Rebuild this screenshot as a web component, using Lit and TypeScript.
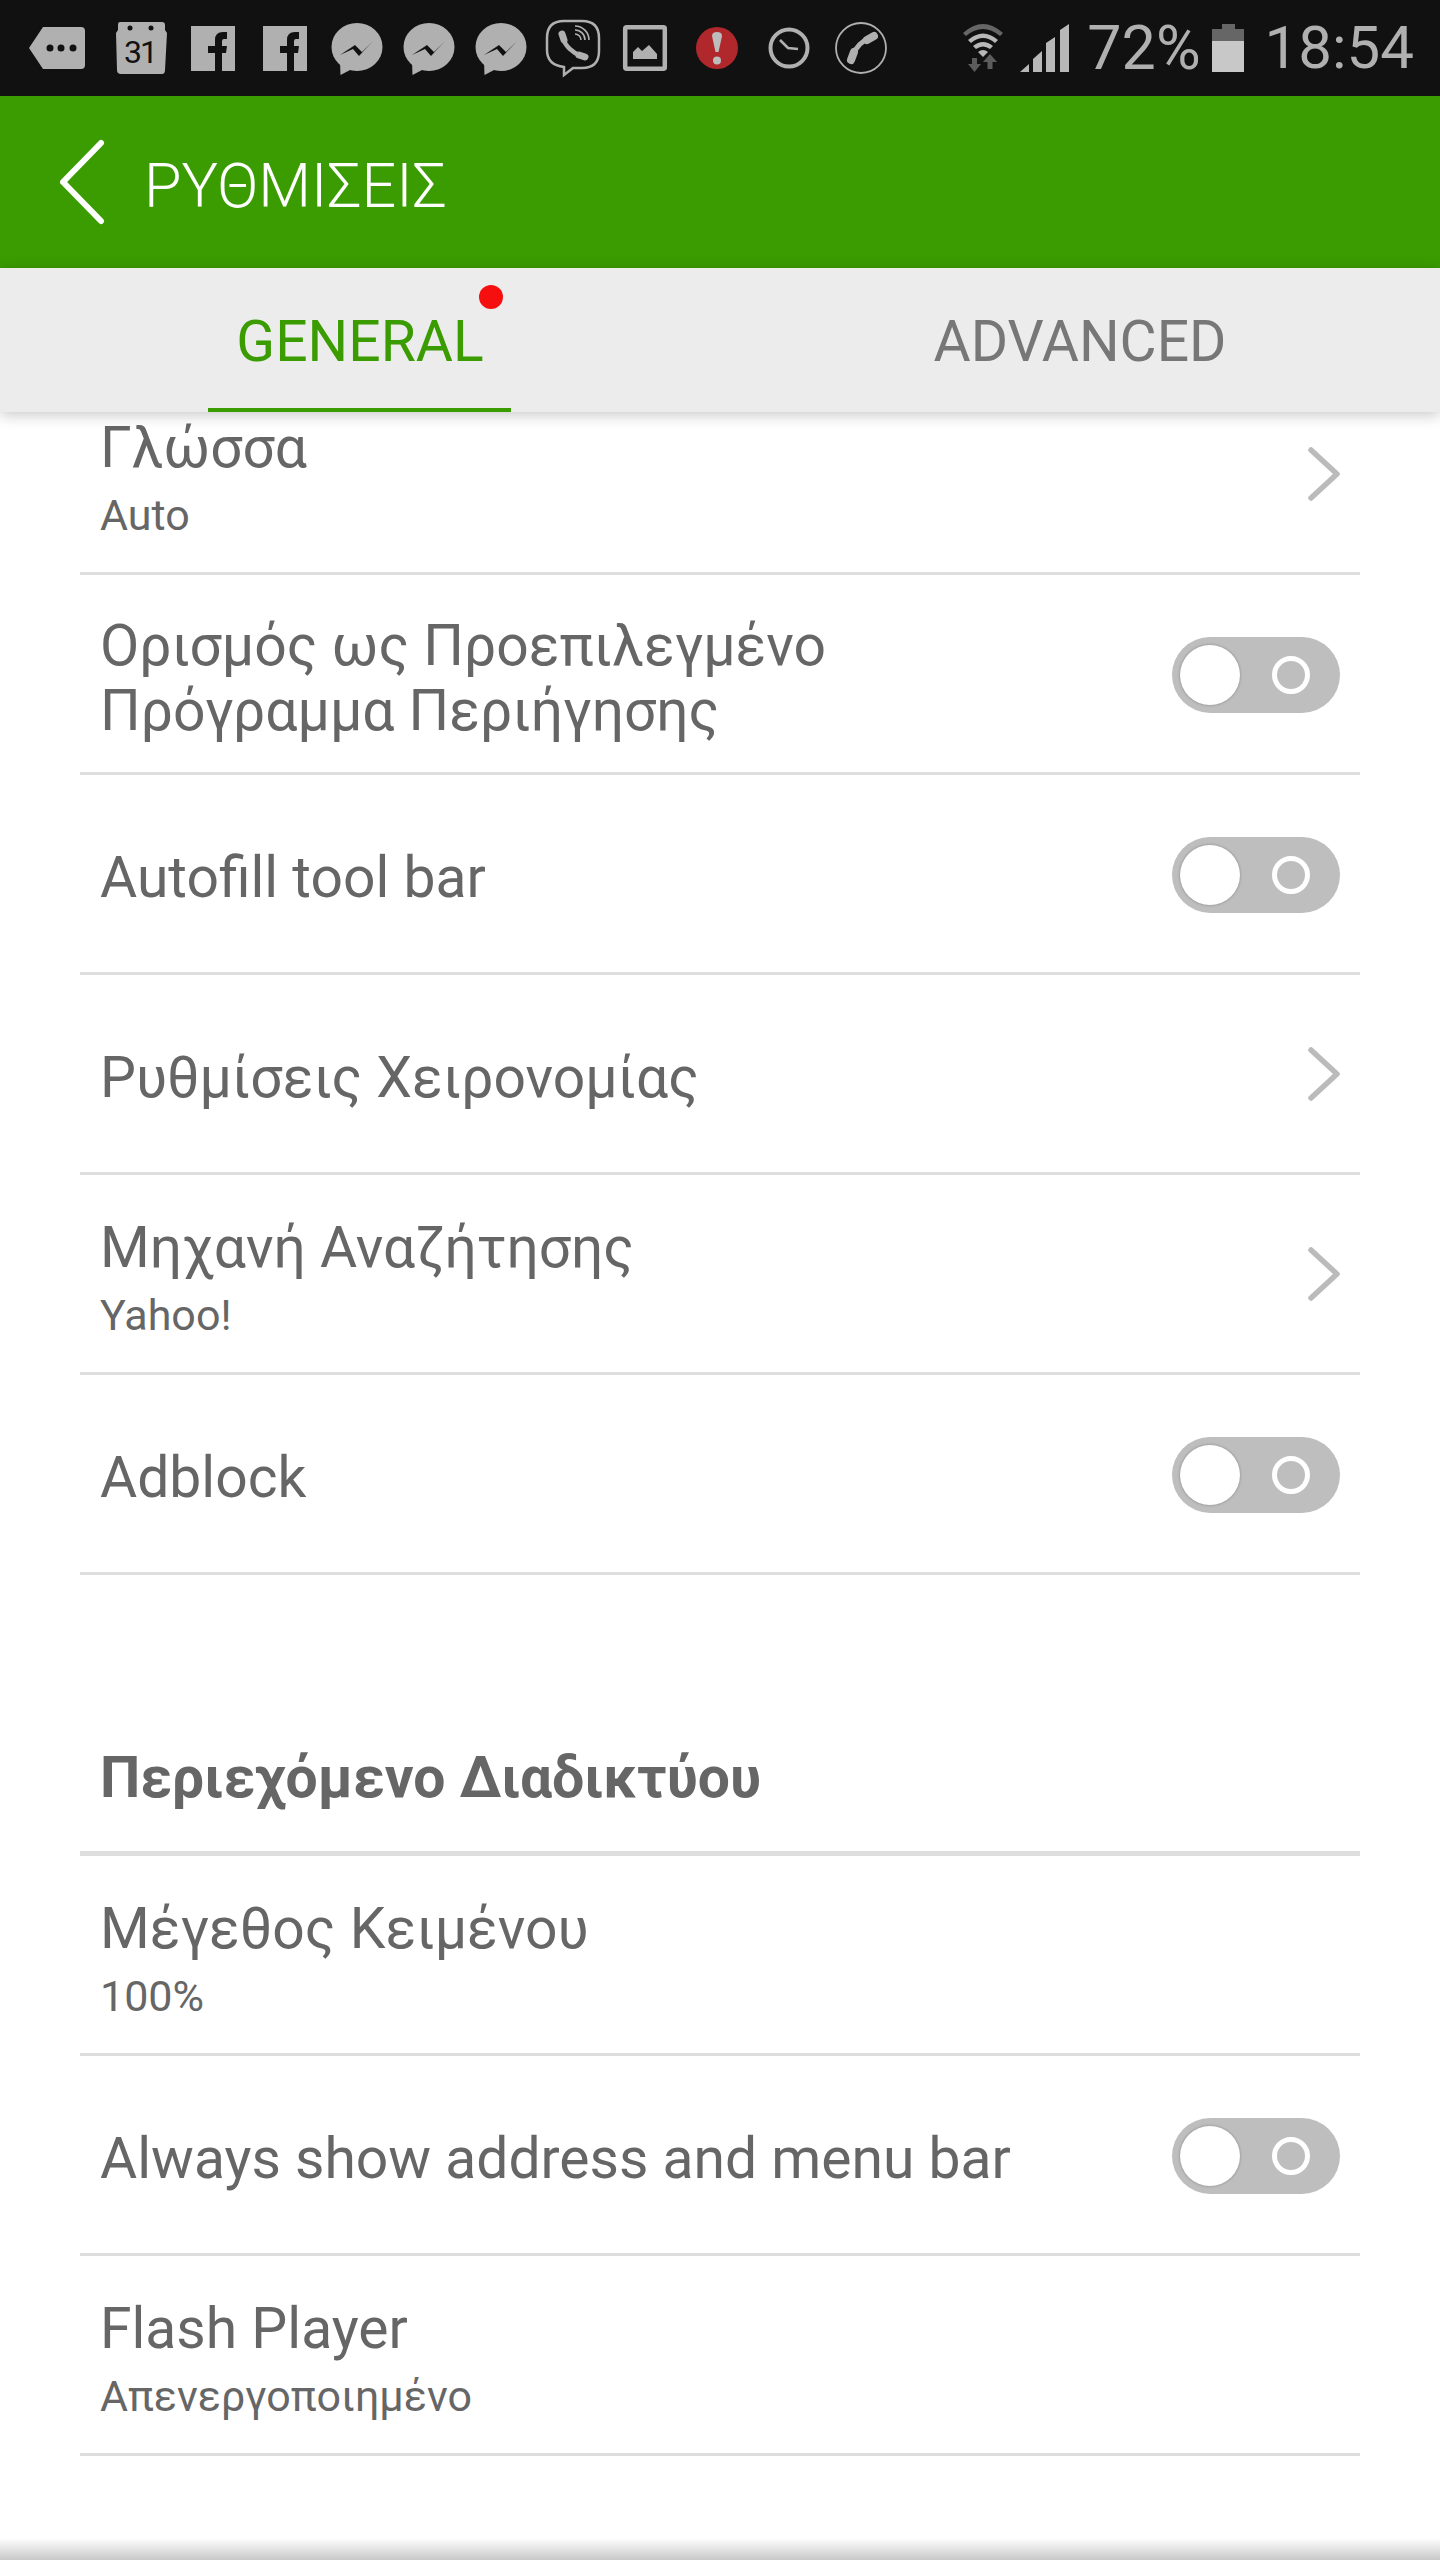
import { LitElement, html, css, svg, nothing } from 'lit';
import { customElement } from 'lit/decorators.js';

type Row = {
  title: string;
  sub?: string;
  trail?: 'toggle' | 'chevron';
};

const generalRows: Row[] = [
  { title: 'Γλώσσα', sub: 'Auto', trail: 'chevron' },
  { title: 'Ορισμός ως Προεπιλεγμένο\nΠρόγραμμα Περιήγησης', trail: 'toggle' },
  { title: 'Autofill tool bar', trail: 'toggle' },
  { title: 'Ρυθμίσεις Χειρονομίας', trail: 'chevron' },
  { title: 'Μηχανή Αναζήτησης', sub: 'Yahoo!', trail: 'chevron' },
  { title: 'Adblock', trail: 'toggle' },
];

const webRows: Row[] = [
  { title: 'Μέγεθος Κειμένου', sub: '100%' },
  { title: 'Always show address and menu bar', trail: 'toggle' },
  { title: 'Flash Player', sub: 'Απενεργοποιημένο' },
];

const GREY = '#b0b0b0';
const BG = '#111111';

// notification icons, each drawn in a 72x96 cell
const tagIcon = svg`
  <path d="M8 48 L22 27 H60 Q64 27 64 31 V65 Q64 69 60 69 H22 Z" fill=${GREY} />
  <circle cx="29" cy="48" r="3.5" fill=${BG} />
  <circle cx="40" cy="48" r="3.5" fill=${BG} />
  <circle cx="52" cy="48" r="3.5" fill=${BG} />`;

const calendarIcon = svg`
  <path d="M15 22 H57 Q60 22 60 25 V30 L62 33 L60 70 Q60 74 57 74 H16 Q12 74 12 70 L11 33 L13 30 V25 Q13 22 15 22 Z" fill=${GREY} />
  <circle cx="25" cy="28" r="2.5" fill=${BG} />
  <circle cx="46" cy="28" r="2.5" fill=${BG} />
  <text x="35" y="63" text-anchor="middle" font-family="Roboto" font-size="32" letter-spacing="-2" fill=${BG}>31</text>`;

const facebookIcon = svg`
  <rect x="14" y="26" width="44" height="45" fill=${GREY} />
  <path d="M38 71 V53 H31 V46 H38 V40 Q38 32 46 32 H50 V39 H47 Q45 39 45 41 V46 H50 L49 53 H45 V71 Z" fill=${BG} />`;

const messengerIcon = svg`
  <ellipse cx="36" cy="47" rx="25.5" ry="24" fill=${GREY} />
  <path d="M19 60 L19.5 75 L31 69 Z" fill=${GREY} />
  <path d="M19 55 L34 45 L41 52 L52 41 L38 56 L32 49 Z" fill=${BG} />`;

const viberIcon = svg`
  <path d="M27 21 H45 Q62 21 62 38 V51 Q62 68 45 68 H36 L27 75 V67 Q10 65 10 50 V38 Q10 21 27 21 Z" fill="none" stroke=${GREY} stroke-width="2.5" />
  <path d="M26 38 C28 46 36 53 44 56" fill="none" stroke=${GREY} stroke-width="4.5" stroke-linecap="round" />
  <path d="M25 34 L27 40 M42 55 L48 57" fill="none" stroke=${GREY} stroke-width="7" stroke-linecap="round" />
  <path d="M38 34 a6 6 0 0 1 6 6 M38 30 a10 10 0 0 1 10 10 M38 26 a14 14 0 0 1 14 14" fill="none" stroke=${GREY} stroke-width="1.6" />`;

const imageIcon = svg`
  <rect x="16.2" y="27.2" width="39.6" height="41.6" rx="1.5" fill="none" stroke=${GREY} stroke-width="4.5" />
  <path d="M24 59 V52 L29 47 L33 51 L40 45 L48 54 V59 Z" fill=${GREY} />`;

const alertIcon = svg`
  <circle cx="36" cy="48" r="21" fill="#b0282c" />
  <path d="M31 36 Q31 32 36 32 Q41 32 41 36 L37.5 52 H34.5 Z" fill="#bdbdbd" />
  <circle cx="36" cy="60.5" r="4" fill="#bdbdbd" />`;

const clockIcon = svg`
  <circle cx="36" cy="48" r="18.5" fill="none" stroke=${GREY} stroke-width="4" />
  <path d="M27 40 L35 48 L45 49" fill="none" stroke=${GREY} stroke-width="2.6" />`;

const callIcon = svg`
  <circle cx="36" cy="48" r="25" fill="none" stroke=${GREY} stroke-width="1.8" />
  <path d="M45 38 C37 41 31 47 28 55" fill="none" stroke=${GREY} stroke-width="5" />
  <path d="M42 40 L49 36 M29 52 L26 60" fill="none" stroke=${GREY} stroke-width="8" stroke-linecap="round" />`;

const notifications = [
  tagIcon,
  calendarIcon,
  facebookIcon,
  facebookIcon,
  messengerIcon,
  messengerIcon,
  messengerIcon,
  viberIcon,
  imageIcon,
  alertIcon,
  clockIcon,
  callIcon,
];

@customElement('app-root')
export class AppRoot extends LitElement {
  static styles = css`
    :host {
      display: flex;
      flex-direction: column;
      width: 1440px;
      height: 2560px;
      background: #ffffff;
      font-family: Roboto, 'Liberation Sans', sans-serif;
      color: #666666;
      overflow: hidden;
    }

    .status {
      flex: none;
      display: flex;
      align-items: center;
      height: 96px;
      padding: 0 26px 0 21px;
      box-sizing: border-box;
      background: #111111;
    }
    .cell {
      display: block;
      width: 72px;
      height: 96px;
    }
    .cell.first {
      margin-right: 12px;
    }
    .net {
      display: block;
      width: 116px;
      height: 96px;
      margin-left: auto;
      margin-right: 14px;
    }
    .status-text {
      font-size: 60px;
      line-height: 96px;
      color: #b0b0b0;
    }
    .percent {
      font-size: 61px;
    }
    .battery {
      display: block;
      width: 32px;
      height: 96px;
      margin: 0 21px 0 11px;
    }

    .header {
      flex: none;
      display: flex;
      align-items: center;
      gap: 37px;
      height: 172px;
      padding-left: 58px;
      background: #3a9c00;
    }
    .back {
      display: block;
      width: 49px;
      height: 92px;
    }
    .header-title {
      padding-top: 8px;
      font-size: 61px;
      font-weight: 300;
      line-height: 1;
      color: #ffffff;
    }

    .tabs {
      flex: none;
      display: grid;
      grid-template-columns: 1fr 1fr;
      height: 144px;
      background: #ececec;
      box-shadow: 0 3px 14px rgba(0, 0, 0, 0.22);
      z-index: 1;
    }
    .tab {
      display: flex;
      align-items: center;
      justify-content: center;
      position: relative;
      font-size: 57px;
      padding-top: 3px;
      box-sizing: border-box;
      color: #777777;
    }
    .tab.active {
      color: #3a9c00;
    }
    .tab.active::after {
      content: '';
      position: absolute;
      left: 208px;
      width: 303px;
      bottom: 0;
      height: 4px;
      background: #3a9c00;
    }
    .dot {
      position: absolute;
      left: 479px;
      top: 17px;
      width: 24px;
      height: 24px;
      border-radius: 50%;
      background: #f50f0f;
    }

    .content {
      flex: 1;
      min-height: 0;
      overflow: hidden;
    }
    .list {
      margin: -37px 80px 0;
    }
    .row {
      display: flex;
      align-items: center;
      justify-content: space-between;
      height: 200px;
      box-sizing: border-box;
      padding: 0 20px;
      border-bottom: 3px solid #dedede;
    }
    .text {
      margin-top: 8px;
    }
    .row.has-sub .text {
      margin-top: 16px;
    }
    .title {
      font-size: 57px;
      line-height: 65px;
      white-space: pre-line;
    }
    .sub {
      margin-top: 2px;
      font-size: 43px;
      line-height: 66px;
    }
    .chevron {
      display: block;
      width: 32px;
      height: 54px;
    }
    .toggle {
      display: flex;
      align-items: center;
      gap: 32px;
      width: 168px;
      height: 76px;
      margin-top: 3px;
      padding-left: 8px;
      box-sizing: border-box;
      border-radius: 38px;
      background: #bebebe;
    }
    .knob {
      width: 60px;
      height: 60px;
      border-radius: 50%;
      background: #ffffff;
      box-shadow: 0 0 3px rgba(0, 0, 0, 0.3);
    }
    .ring {
      width: 38px;
      height: 38px;
      box-sizing: border-box;
      border: 5px solid #ffffff;
      border-radius: 50%;
    }
    .section-head {
      height: 281px;
      box-sizing: border-box;
      padding: 170px 0 0 20px;
      border-bottom: 5px solid #dedede;
      font-size: 57px;
      font-weight: 700;
      line-height: 65px;
    }

    .edge {
      flex: none;
      height: 22px;
      background: linear-gradient(to bottom, rgba(255, 255, 255, 0), #c9c9c9);
    }
  `;

  renderStatus() {
    return html`
      <div class="status">
        ${notifications.map(
          (icon, i) => html`<svg class="cell ${i === 0 ? 'first' : ''}" viewBox="0 0 72 96">${icon}</svg>`
        )}
        <svg class="net" viewBox="956 0 116 96">
          <path d="M962 33 Q982 15 1002 33 L999 36 Q982 22 965 36 Z" fill="#666666" />
          <path d="M967 40 Q982 27 997 40 L994 43 Q982 33 970 43 Z" fill="#b8b8b8" />
          <path d="M972 46 Q982 38 992 46 L989 49 Q982 44 975 49 Z" fill="#b8b8b8" />
          <path d="M977 52 Q982 48 987 52 L982 57 Z" fill="#b8b8b8" />
          <path d="M971 58 H976 V64 H980 L973.5 72 L967 64 H971 Z" fill="#5c5c5c" />
          <path d="M986.5 69 H991.5 V62 H996 L989 54 L982 62 H986.5 Z" fill="#5c5c5c" />
          <path d="M1019 72 L1028 64 V72 Z M1032 59 L1041 51 V72 H1032 Z M1045 43 L1054 37 V72 H1045 Z M1059 30 L1068 24 V72 H1059 Z" fill="#b8b8b8" />
        </svg>
        <span class="status-text percent">72%</span>
        <svg class="battery" viewBox="0 0 32 96">
          <path d="M10 24 H23 V29 H32 V41 H0 V29 H10 Z" fill="#666666" />
          <rect x="0" y="41" width="32" height="31" fill="#c8c8c8" />
        </svg>
        <span class="status-text">18:54</span>
      </div>
    `;
  }

  renderTrail(trail: Row['trail']) {
    if (trail === 'toggle') {
      return html`<div class="toggle"><div class="knob"></div><div class="ring"></div></div>`;
    }
    if (trail === 'chevron') {
      return html`
        <svg class="chevron" viewBox="0 0 32 54">
          <path d="M3 3 L29 27 L3 51" fill="none" stroke="#bbbbbb" stroke-width="5.5" stroke-linecap="round" stroke-linejoin="round" />
        </svg>
      `;
    }
    return nothing;
  }

  renderRow(row: Row) {
    return html`
      <div class="row ${row.sub ? 'has-sub' : ''}">
        <div class="text">
          <div class="title">${row.title}</div>
          ${row.sub ? html`<div class="sub">${row.sub}</div>` : nothing}
        </div>
        ${this.renderTrail(row.trail)}
      </div>
    `;
  }

  render() {
    return html`
      ${this.renderStatus()}
      <div class="header">
        <svg class="back" viewBox="0 0 49 92">
          <path d="M43 7 L5 46 L43 85" fill="none" stroke="#ffffff" stroke-width="6" stroke-linecap="round" stroke-linejoin="round" />
        </svg>
        <div class="header-title">ΡΥΘΜΙΣΕΙΣ</div>
      </div>
      <div class="tabs">
        <div class="tab active">GENERAL<span class="dot"></span></div>
        <div class="tab">ADVANCED</div>
      </div>
      <div class="content">
        <div class="list">
          ${generalRows.map((row) => this.renderRow(row))}
          <div class="section-head">Περιεχόμενο Διαδικτύου</div>
          ${webRows.map((row) => this.renderRow(row))}
        </div>
      </div>
      <div class="edge"></div>
    `;
  }
}
